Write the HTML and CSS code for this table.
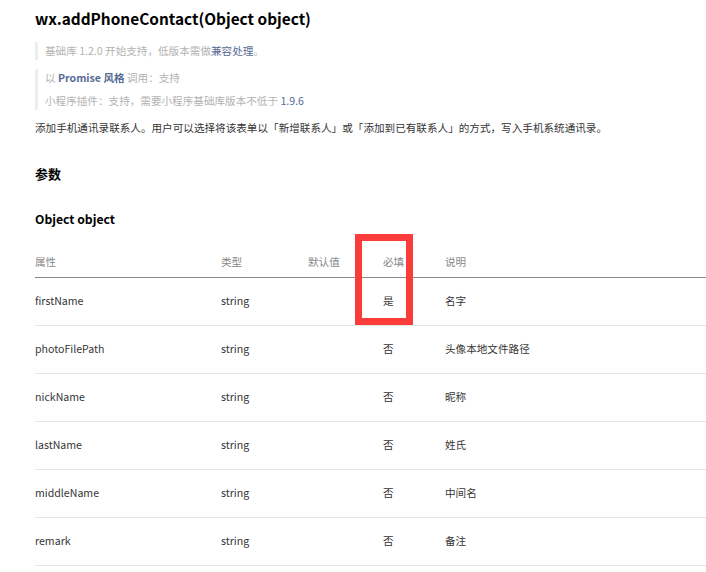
FILE: index.html
```html
<!DOCTYPE html>
<html>

<head>
    <meta charset="utf-8" />
    <title>wx.addPhoneContact</title>
    <link rel="stylesheet" href="styles.css">
</head>

<body>
    <div class="page">
        <h1 class="apiTitle">wx.addPhoneContact(Object object)</h1>
        <blockquote class="tip tipFirst">
            <p>基础库 1.2.0 开始支持，低版本需做<a class="link">兼容处理</a>。</p>
        </blockquote>
        <blockquote class="tip">
            <p>以 <b class="link">Promise 风格</b> 调用：支持</p>
            <p>小程序插件：支持，需要小程序基础库版本不低于 <span class="link">1.9.6</span></p>
        </blockquote>
        <p class="desc">添加手机通讯录联系人。用户可以选择将该表单以「新增联系人」或「添加到已有联系人」的方式，写入手机系统通讯录。</p>

        <h3 class="sectionTitle">参数</h3>
        <h4 class="subTitle">Object object</h4>

        <div class="tableWrap">
            <table class="paramTable">
                <colgroup>
                    <col class="colName">
                    <col class="colType">
                    <col class="colDefault">
                    <col class="colRequired">
                    <col>
                </colgroup>
                <thead>
                    <tr>
                        <th>属性</th>
                        <th>类型</th>
                        <th>默认值</th>
                        <th>必填</th>
                        <th>说明</th>
                    </tr>
                </thead>
                <tbody>
                    <tr><td>firstName</td><td>string</td><td></td><td>是</td><td>名字</td></tr>
                    <tr><td>photoFilePath</td><td>string</td><td></td><td>否</td><td>头像本地文件路径</td></tr>
                    <tr><td>nickName</td><td>string</td><td></td><td>否</td><td>昵称</td></tr>
                    <tr><td>lastName</td><td>string</td><td></td><td>否</td><td>姓氏</td></tr>
                    <tr><td>middleName</td><td>string</td><td></td><td>否</td><td>中间名</td></tr>
                    <tr><td>remark</td><td>string</td><td></td><td>否</td><td>备注</td></tr>
                </tbody>
            </table>
            <!-- 標註框 -->
            <div class="markBox"></div>
        </div>
    </div>
</body>

</html>
```

FILE: styles.css
```css
* {
    box-sizing: border-box;
}

h1,
h3,
h4,
p,
body,
blockquote,
table {
    margin: 0px;
    padding: 0px;
}

body {
    font-family: "Noto Sans CJK SC", sans-serif;
    font-size: 10.6px;
    color: #353535;
    background-color: #fff;
    overflow: hidden;
}

.page {
    padding: 8px 0px 0px 35px;
}

.apiTitle {
    font-size: 15.4px;
    line-height: 20px;
    font-weight: bold;
    color: #000;
}

.tip {
    border-left: 3px solid #eee;
    padding: 1px 0px 1px 7px;
    color: #b2b2b2;
    line-height: 16px;
}

.tipFirst {
    margin-top: 14px;
    margin-bottom: 9px;
}

.tip p + p {
    margin-top: 7px;
}

.link {
    color: #576b95;
    text-decoration: none;
}

.desc {
    margin-top: 9px;
    line-height: 18px;
}

.sectionTitle {
    margin-top: 27px;
    font-size: 13px;
    line-height: 20px;
    font-weight: bold;
    color: #000;
}

.subTitle {
    margin-top: 25px;
    font-size: 12.2px;
    line-height: 20px;
    font-weight: bold;
    color: #000;
}

.tableWrap {
    position: relative;
    margin-top: 18px;
}

.paramTable {
    width: 671px;
    border-collapse: collapse;
    table-layout: fixed;
}

.colName {
    width: 186px;
}

.colType {
    width: 87px;
}

.colDefault {
    width: 75px;
}

.colRequired {
    width: 62px;
}

.paramTable th {
    height: 30px;
    padding: 0px;
    text-align: left;
    font-weight: normal;
    color: #888;
    border-bottom: 1px solid #888;
    vertical-align: middle;
}

.paramTable td {
    height: 48px;
    padding: 0px 0px 2px 0px;
    text-align: left;
    border-bottom: 1px solid #e5e5e5;
    vertical-align: middle;
}

.markBox {
    position: absolute;
    left: 320px;
    top: -13px;
    width: 58px;
    height: 91px;
    border: 7px solid #fc3b3b;
}
```
